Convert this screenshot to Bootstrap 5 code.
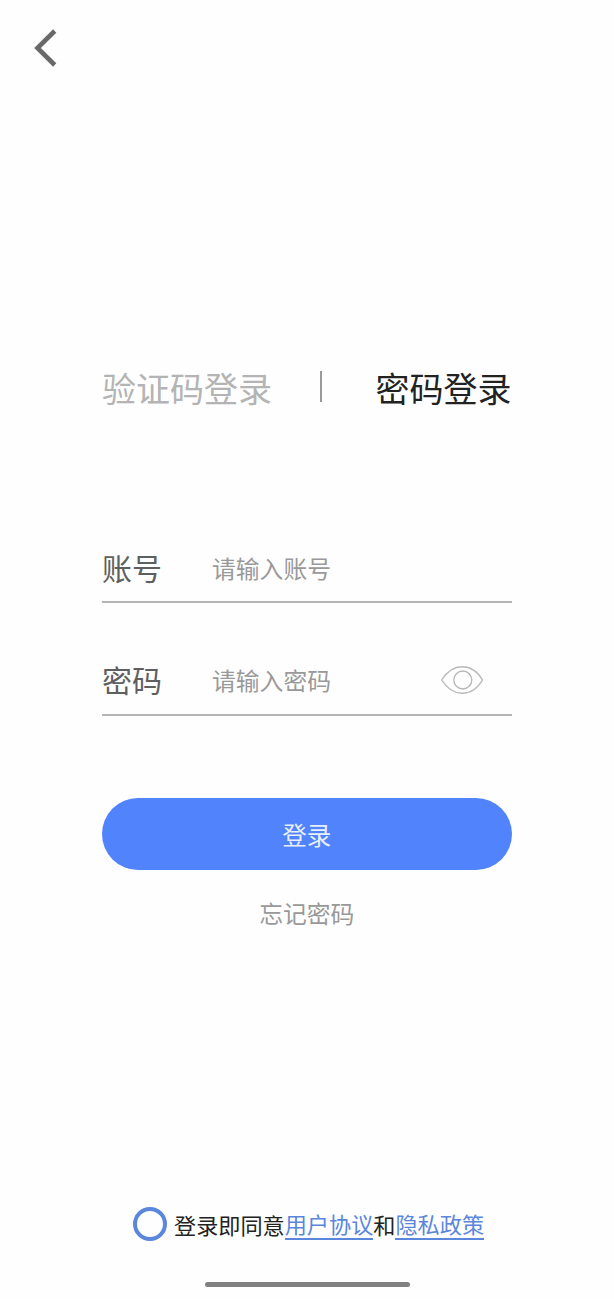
<!DOCTYPE html>
<html lang="zh-CN">
<head>
<meta charset="utf-8">
<meta name="viewport" content="width=device-width, initial-scale=1">
<title>密码登录</title>
<link href="https://cdn.jsdelivr.net/npm/bootstrap@5.3.0/dist/css/bootstrap.min.css" rel="stylesheet">
<style>
  body { font-family: "Noto Sans CJK SC", sans-serif; background: #fefefe; color: #222; }
  .screen { height: 1299px; }
  .back-bar { height: 96px; padding-left: 34px; }
  .login-panel { width: 409.5px; margin-left: 102px; }
  .login-tabs { height: 60px; margin-top: 262px; font-size: 34px; line-height: 60px; }
  .login-tabs a { color: #b4b4b4; text-decoration: none; }
  .login-tabs a.active { color: #222; }
  .tab-divider { width: 1.5px; height: 31px; background: #9a9a9a; margin-right: 6px; margin-top: -3px; }
  .field { height: 113px; border-bottom: 2px solid #b5b5b5; padding-top: 43px; }
  .field.first-field { margin-top: 85px; height: 100px; padding-top: 31px; }
  .field label { width: 110px; flex-shrink: 0; font-size: 30px; line-height: 64px; margin-top: -2px; color: #5f5f5f; }
  .field .form-control { font-size: 23.8px; line-height: 36px; color: #555; box-shadow: none; height: 36px; min-width: 0; }
  .field .form-control::placeholder { color: #999; opacity: 1; }
  .eye-btn { width: 44px; margin-right: 28px; }
  .btn-login { --bs-btn-bg: #5083fc; --bs-btn-color: #e8effc; --bs-btn-hover-bg: #4577ee; --bs-btn-hover-color: #fff;
    height: 71.5px; margin-top: 82px; font-size: 24.5px; line-height: 73px; border: 0; }
  .forgot { font-size: 23.8px; line-height: 36px; margin-top: 25px; color: #999; text-decoration: none; }
  .agreement { font-size: 22.15px; line-height: 30px; margin-left: 133px; margin-bottom: 26px; height: 34px; }
  .agreement a { color: #5a86dc; text-decoration: none; border-bottom: 2px solid #5a86dc; display: inline-block; }
  .agree-radio.form-check-input { width: 34px; height: 34px; border: 4px solid #5a86dc; margin: 0 7px 0 0; background-color: transparent; }
  .home-bar { width: 205px; height: 5px; background: #808080; margin: 15px 0 12px 204.5px; }
</style>
</head>
<body>
<main class="screen d-flex flex-column overflow-hidden">
  <header class="back-bar d-flex align-items-center flex-shrink-0">
    <a href="#" aria-label="返回" class="d-flex">
      <svg width="24" height="40" viewBox="0 0 24 40" fill="none" stroke="#686868" stroke-width="4.6"><path d="M20.700 3 3.500 20 20.700 37"/></svg>
    </a>
  </header>

  <form class="login-panel d-flex flex-column">
    <nav class="login-tabs d-flex justify-content-between align-items-center">
      <a href="#">验证码登录</a>
      <span class="tab-divider"></span>
      <a href="#" class="active">密码登录</a>
    </nav>

    <div class="field first-field d-flex align-items-center">
      <label for="account">账号</label>
      <input id="account" type="text" class="form-control border-0 p-0 bg-transparent rounded-0" placeholder="请输入账号">
    </div>
    <div class="field d-flex align-items-center">
      <label for="password">密码</label>
      <input id="password" type="password" class="form-control flex-fill w-auto border-0 p-0 bg-transparent rounded-0" placeholder="请输入密码">
      <button type="button" class="eye-btn btn p-0 border-0 d-flex flex-shrink-0" aria-label="显示密码">
        <svg width="44" height="30" viewBox="0 0 44 30" fill="none" stroke="#b9b9b9" stroke-width="1.4"><path d="M1.700 15C7 6.500 13 1.700 22.300 1.700S37.500 6.500 42.600 15C37.500 23.500 31.500 28.300 22.300 28.300S7 23.500 1.700 15Z"/><circle cx="22.800" cy="15" r="9"/></svg>
      </button>
    </div>

    <button type="button" class="btn btn-login rounded-pill w-100 p-0">登录</button>
    <a href="#" class="forgot align-self-center">忘记密码</a>
  </form>

  <div class="agreement d-flex align-items-center mt-auto flex-shrink-0">
    <input id="agree" type="radio" class="agree-radio form-check-input flex-shrink-0">
    <label for="agree">登录即同意</label><a href="#">用户协议</a><span>和</span><a href="#">隐私政策</a>
  </div>
  <div class="home-bar rounded-pill flex-shrink-0"></div>
</main>
<script src="https://cdn.jsdelivr.net/npm/bootstrap@5.3.0/dist/js/bootstrap.bundle.min.js"></script>
</body>
</html>
